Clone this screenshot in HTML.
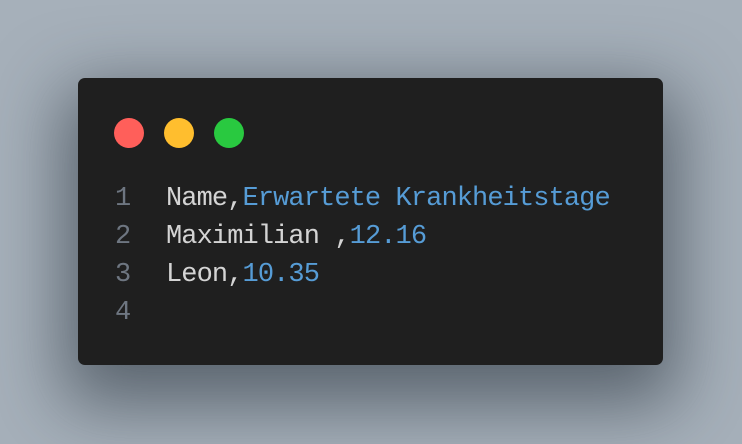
<!DOCTYPE html>
<html><head><style>
html,body{margin:0;padding:0;}
body{width:742px;height:444px;background:#a6b0ba;position:relative;overflow:hidden;font-family:"Liberation Mono",monospace;}
.card{position:absolute;left:78px;top:78px;width:585px;height:287px;background:#1f1f1f;border-radius:7px;box-shadow:0 25px 70px 15px rgba(40,50,60,0.6);}
.dot{position:absolute;top:40px;width:30px;height:30px;border-radius:50%;}
.line{position:absolute;left:0;font-size:27px;letter-spacing:-0.9px;line-height:38px;white-space:pre;color:#d4d4d4;}
.n{position:absolute;left:37px;color:#6e7681;}
.t{position:absolute;left:88px;}
.b{color:#569cd6;}
</style></head><body>
<div class="card">
<div class="dot" style="left:36px;background:#ff5f5a"></div>
<div class="dot" style="left:86px;background:#ffbe2e"></div>
<div class="dot" style="left:136px;background:#29c940"></div>
<div class="line" style="top:102px"><span class="n">1</span><span class="t">Name,<span class="b">Erwartete Krankheitstage</span></span></div>
<div class="line" style="top:140px"><span class="n">2</span><span class="t">Maximilian ,<span class="b">12.16</span></span></div>
<div class="line" style="top:178px"><span class="n">3</span><span class="t">Leon,<span class="b">10.35</span></span></div>
<div class="line" style="top:216px"><span class="n">4</span></div>
</div>
</body></html>
